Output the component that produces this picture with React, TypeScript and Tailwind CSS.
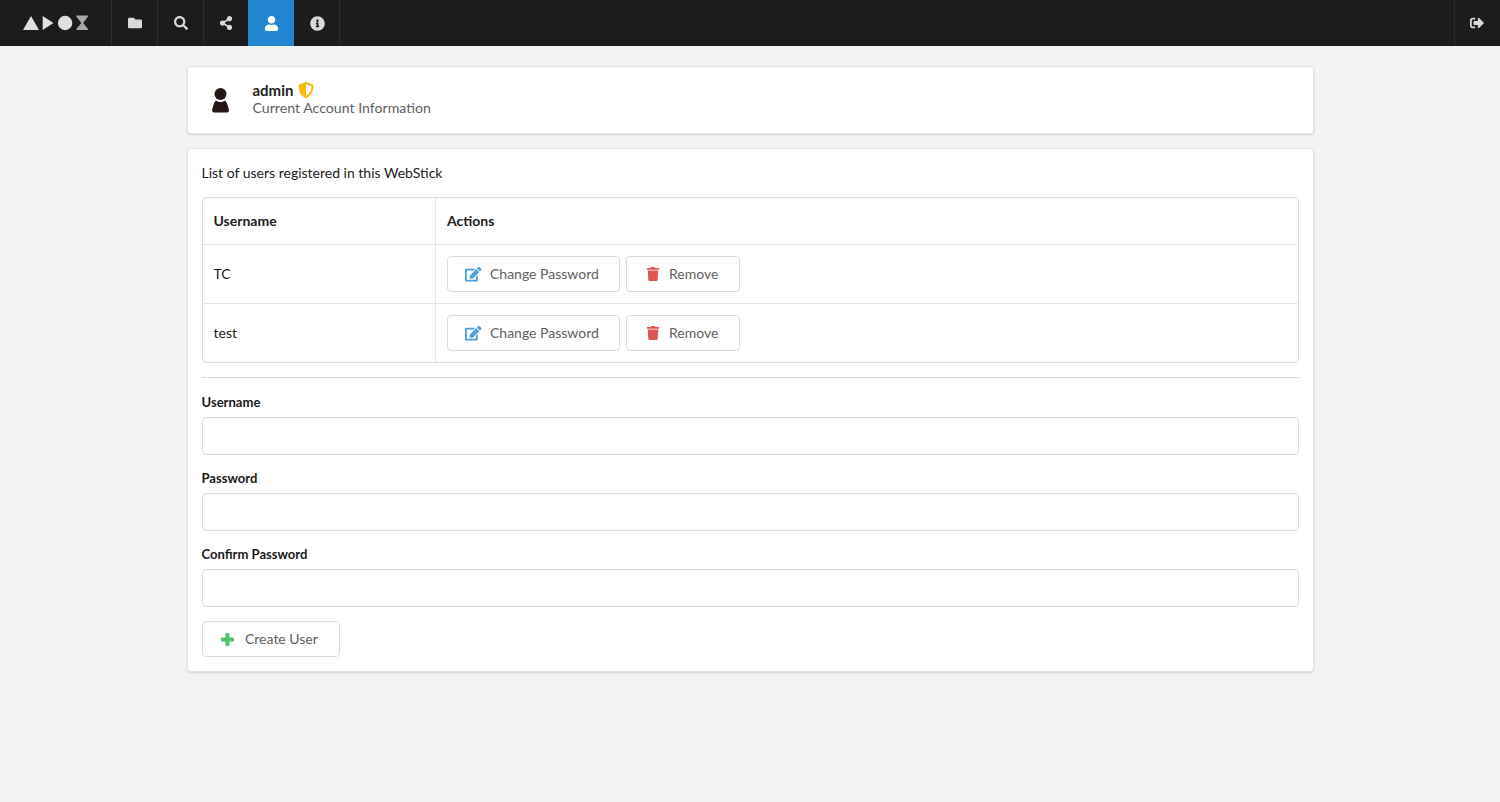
import React from "react";
import { FaFolder, FaSearch, FaShareAlt, FaUser, FaInfoCircle, FaSignOutAlt, FaEdit, FaTrash, FaShieldAlt } from "react-icons/fa";

function NavItem({ icon, active, w, noBorder }: { icon: React.ReactNode; active?: boolean; w: string; noBorder?: boolean }) {
  return (
    <div className={`flex items-center justify-center h-full text-[14px] ${w} ${noBorder ? "" : "border-r border-[#2c2d2e]"} ${active ? "bg-[#2185d0] text-white" : "text-[#d9d9d9]"}`}>
      {icon}
    </div>
  );
}

function Btn({ icon, label, w }: { icon: React.ReactNode; label: string; w: string }) {
  return (
    <button className={`h-[36px] flex items-center rounded-[4px] border border-[#dcdcdc] bg-white text-[14px] text-[#5f5f5f] ${w}`}>
      {icon}
      <span className="pb-[2px]">{label}</span>
    </button>
  );
}

function Row({ name }: { name: string }) {
  return (
    <div className="flex h-[59px] border-t border-[#e6e6e6] text-[14px] text-[#212121]">
      <div className="w-[233px] flex items-center pl-[10.5px] pb-[2px] border-r border-[#e6e6e6]">{name}</div>
      <div className="flex items-center pl-[11px] gap-[6px]">
        <Btn w="w-[173px]" label="Change Password" icon={<span className="w-[42px] pl-[17px] text-[#4a9fe0] text-[16.5px]"><FaEdit /></span>} />
        <Btn w="w-[114px]" label="Remove" icon={<span className="w-[42px] pl-[18.5px] text-[#e25555] text-[14px]"><FaTrash /></span>} />
      </div>
    </div>
  );
}

function Field({ label, mb }: { label: string; mb: string }) {
  return (
    <div className={mb}>
      <div className="text-[13.05px] font-bold text-[#1a1a1a] leading-[16px] mb-[7px] -ml-[0.5px]">{label}</div>
      <input className="block w-full h-[38px] rounded-[4px] border border-[#dcdcdc] bg-white" />
    </div>
  );
}

export default function App() {
  return (
    <div className="min-h-[802px] bg-[#f3f3f3] font-['Lato','Open_Sans',sans-serif]">
      <nav className="h-[46px] flex bg-[#1b1c1d]">
        <div className="w-[112px] h-full flex items-center border-r border-[#2c2d2e] pl-[23px]">
          <svg width="66" height="16" viewBox="0 0 66 16">
            <polygon points="0,15 16,15 8,1" fill="#e0e0e0" />
            <polygon points="19.7,1 19.7,15 30.5,8" fill="#e0e0e0" />
            <circle cx="42.1" cy="8" r="7.2" fill="#e0e0e0" />
            <polygon points="53.3,0.5 65,0.5 65,1.5 60.5,7.5 60.5,8.5 65,14 65,15 53.3,15 53.3,14 58,8.5 58,7.5 53.3,1.5" fill="#a8a8a8" />
          </svg>
        </div>
        <NavItem w="w-[46px]" icon={<FaFolder />} />
        <NavItem w="w-[46px]" icon={<FaSearch />} />
        <NavItem w="w-[44px]" noBorder icon={<FaShareAlt />} />
        <NavItem w="w-[46px]" active noBorder icon={<FaUser className="text-[15px]" />} />
        <NavItem w="w-[46px] pl-[1px]" icon={<FaInfoCircle className="text-[15px]" />} />
        <div className="ml-auto w-[46px] h-full flex items-center justify-center pr-[2px] border-l border-[#2c2d2e] text-[#d9d9d9] text-[14px]">
          <FaSignOutAlt />
        </div>
      </nav>

      <main className="w-[1127px] ml-[187px] pt-[20px]">
        <section className="h-[68px] rounded-[4px] bg-white border border-[rgba(34,36,38,0.12)] shadow-[0_1px_2px_rgba(34,36,38,0.15)] flex items-center pl-[24px]">
          <svg width="17" height="25" viewBox="0 0 17 25" fill="#231815" className="mr-[23.5px]">
            <circle cx="8.5" cy="6" r="6" />
            <path d="M4 12.5 Q8.5 15.5 13 12.5 Q15 14 15.5 17 L17 22 Q17 24.5 15 24.5 L2 24.5 Q0 24.5 0 22 L1.5 17 Q2 14 4 12.5Z" />
          </svg>
          <div className="pb-[2px]">
            <div className="flex items-center text-[15px] font-bold text-[#222] leading-[18px]">
              admin
              <FaShieldAlt className="ml-[5px] text-[#fbb80f] text-[16px]" />
            </div>
            <div className="text-[14.15px] text-[#5f5f5f] leading-[18px]">Current Account Information</div>
          </div>
        </section>

        <section className="mt-[14px] rounded-[4px] bg-white border border-[rgba(34,36,38,0.12)] shadow-[0_1px_2px_rgba(34,36,38,0.15)] px-[14px] pt-[14px] pb-[14px]">
          <div className="text-[14px] text-[#212121] leading-[20px] mb-[14px] -ml-[0.5px]">List of users registered in this WebStick</div>
          <div className="rounded-[4px] border border-[#dcdcdc]">
            <div className="flex h-[46px] text-[14px] font-bold text-[#212121]">
              <div className="w-[233px] flex items-center pl-[10.5px] pb-[2px] border-r border-[#e6e6e6]">Username</div>
              <div className="flex items-center pl-[11px] pb-[2px]">Actions</div>
            </div>
            <Row name="TC" />
            <Row name="test" />
          </div>
          <div className="h-px bg-[#dcdcdc] mt-[14px] mb-[16px]" />
          <Field label="Username" mb="mb-[15px]" />
          <Field label="Password" mb="mb-[15px]" />
          <Field label="Confirm Password" mb="mb-[14px]" />
          <Btn
            w="w-[138px]"
            label="Create User"
            icon={
              <span className="w-[42px] pl-[18px] flex">
                <svg width="13" height="13" viewBox="0 0 13 13" fill="#4fc46a">
                  <path d="M4.5 1 Q4.5 0 5.5 0 L7.5 0 Q8.5 0 8.5 1 L8.5 4.5 L12 4.5 Q13 4.5 13 5.5 L13 7.5 Q13 8.5 12 8.5 L8.5 8.5 L8.5 12 Q8.5 13 7.5 13 L5.5 13 Q4.5 13 4.5 12 L4.5 8.5 L1 8.5 Q0 8.5 0 7.5 L0 5.5 Q0 4.5 1 4.5 L4.5 4.5Z" />
                </svg>
              </span>
            }
          />
        </section>
      </main>
    </div>
  );
}
